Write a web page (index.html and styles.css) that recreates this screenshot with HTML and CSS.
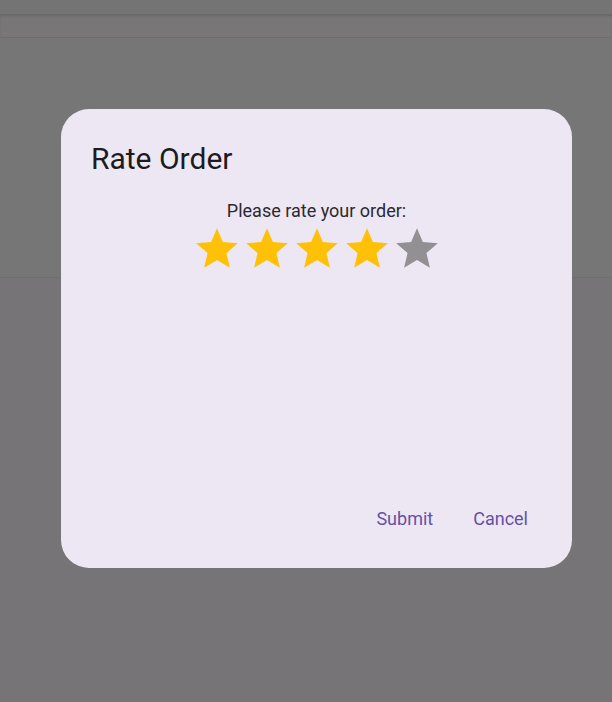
FILE: index.html
```html
<!DOCTYPE html>
<html>
<head>
<meta charset="utf-8">
<link rel="stylesheet" href="styles.css">
</head>
<body>
<div class="screen">
  <div class="statusbar"></div>
  <div class="appbar"></div>
  <div class="panel"></div>
  <div class="rest"></div>
</div>
<div class="dialog">
  <h2 class="title">Rate Order</h2>
  <div class="body">
    <p class="prompt">Please rate your order:</p>
    <div class="stars">
      <svg class="star on" viewBox="0 0 24 24"><path d="M12 17.27L18.18 21l-1.64-7.03L22 9.24l-7.19-.61L12 2 9.19 8.63 2 9.24l5.46 4.73L5.82 21z"/></svg>
      <svg class="star on" viewBox="0 0 24 24"><path d="M12 17.27L18.18 21l-1.64-7.03L22 9.24l-7.19-.61L12 2 9.19 8.63 2 9.24l5.46 4.73L5.82 21z"/></svg>
      <svg class="star on" viewBox="0 0 24 24"><path d="M12 17.27L18.18 21l-1.64-7.03L22 9.24l-7.19-.61L12 2 9.19 8.63 2 9.24l5.46 4.73L5.82 21z"/></svg>
      <svg class="star on" viewBox="0 0 24 24"><path d="M12 17.27L18.18 21l-1.64-7.03L22 9.24l-7.19-.61L12 2 9.19 8.63 2 9.24l5.46 4.73L5.82 21z"/></svg>
      <svg class="star off" viewBox="0 0 24 24"><path d="M12 17.27L18.18 21l-1.64-7.03L22 9.24l-7.19-.61L12 2 9.19 8.63 2 9.24l5.46 4.73L5.82 21z"/></svg>
    </div>
  </div>
  <div class="actions">
    <button class="btn">Submit</button>
    <button class="btn">Cancel</button>
  </div>
</div>
</body>
</html>
```
FILE: styles.css
```css
html, body {
  margin: 0;
  padding: 0;
}
body {
  width: 612px;
  height: 702px;
  overflow: hidden;
  background: #767477;
  font-family: Roboto, "Noto Sans", sans-serif;
  position: relative;
}
.screen {
  display: flex;
  flex-direction: column;
  height: 702px;
}
.statusbar {
  height: 14px;
  background: #747474;
}
.appbar {
  height: 23px;
  background: #787676;
  box-shadow: inset 0 3px 3px -1px rgba(0,0,0,0.14);
  border-bottom: 1px solid #6e6e6e;
}
.panel {
  height: 239px;
  background: #767676;
  border-bottom: 1px solid #6f6f6f;
  box-shadow: 0 2px 3px rgba(0,0,0,0.08);
}
.rest {
  flex: 1;
  background: #767477;
}
.dialog {
  position: absolute;
  left: 61px;
  top: 109px;
  width: 511px;
  height: 459px;
  box-sizing: border-box;
  background: #ede7f4;
  border-radius: 28px;
  padding: 32px 24px 29px 24px;
  display: flex;
  flex-direction: column;
}
.title {
  margin: 0 0 0 6px;
  font-size: 30px;
  font-weight: 400;
  line-height: 36px;
  color: #1d1b20;
}
.body {
  flex: 1;
  display: flex;
  flex-direction: column;
  align-items: center;
  padding-top: 22px;
}
.prompt {
  margin: 0;
  font-size: 18px;
  line-height: 24px;
  color: #2b2930;
}
.stars {
  display: flex;
  margin-top: 1px;
}
.star {
  width: 50px;
  height: 50px;
  display: block;
}
.star.on { fill: #ffc107; }
.star.off { fill: #939094; }
.actions {
  display: flex;
  justify-content: flex-end;
  gap: 16px;
  padding-right: 8px;
}
.btn {
  border: none;
  background: transparent;
  font-family: Roboto, "Noto Sans", sans-serif;
  font-size: 18px;
  color: #6750a4;
  padding: 8px 12px;
  line-height: 24px;
  margin: 0;
}
```
